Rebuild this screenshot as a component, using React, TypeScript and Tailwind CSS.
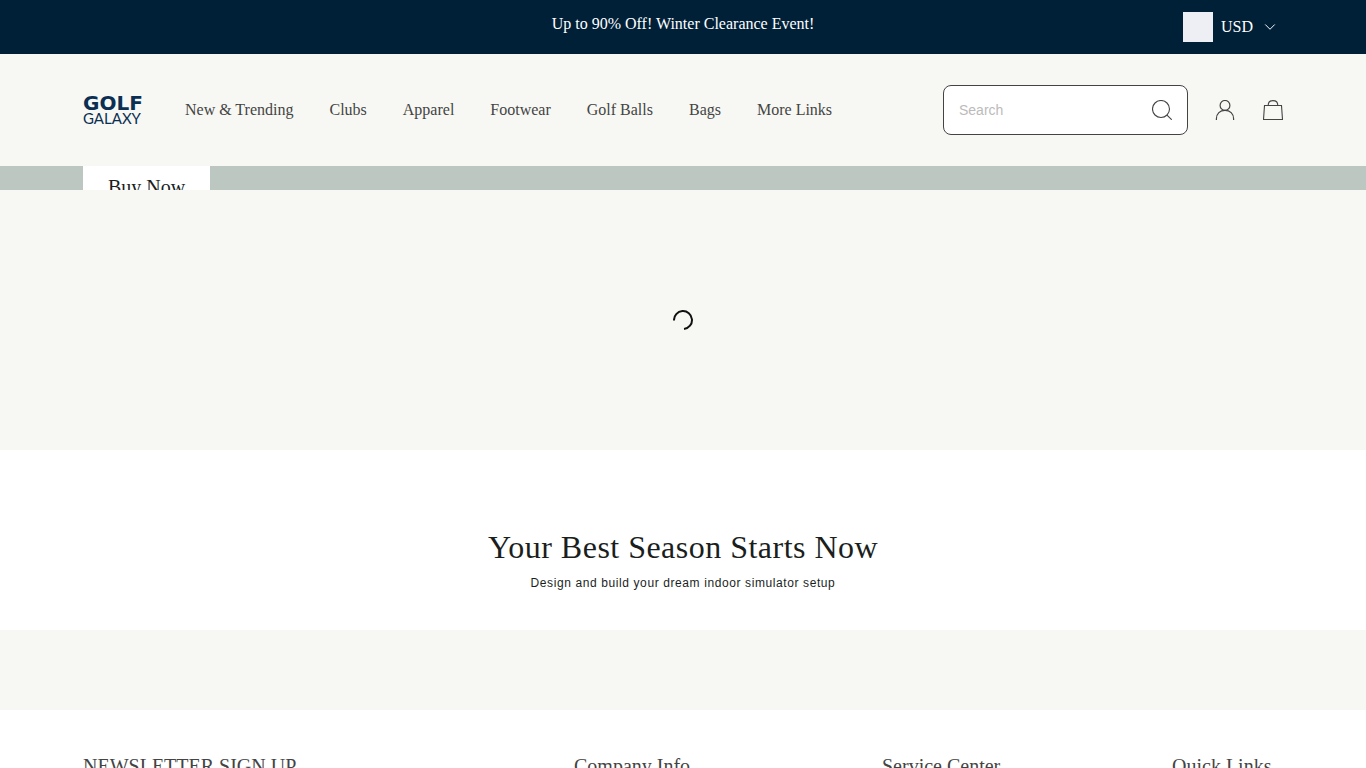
import { ChevronDown } from "lucide-react";

const NAV_LINKS = [
  "New & Trending",
  "Clubs",
  "Apparel",
  "Footwear",
  "Golf Balls",
  "Bags",
  "More Links",
];

const FOOTER_COLUMNS = [
  "NEWSLETTER SIGN UP",
  "Company Info",
  "Service Center",
  "Quick Links",
];

function Logo() {
  return (
    <a
      href="#"
      aria-label="Golf Galaxy"
      className="flex w-[60px] flex-col whitespace-nowrap text-[#0b2f52]"
    >
      <span className="font-['DejaVu_Sans'] text-[20px] leading-4 font-bold">
        GOLF
      </span>
      <span className="font-['Lato'] text-[15px] leading-[14px]">GALAXY</span>
    </a>
  );
}

function SearchIcon() {
  return (
    <svg width="20" height="20" viewBox="0 0 20 20" fill="none" stroke="#444" strokeWidth="1.1">
      <circle cx="9" cy="9" r="8.5" />
      <path d="M15 15.2l4.7 4.5" />
    </svg>
  );
}

function UserIcon() {
  return (
    <svg width="20" height="20" viewBox="0 0 20 20" fill="none" stroke="#444" strokeWidth="1.2">
      <circle cx="10" cy="5.4" r="4.9" />
      <path d="M1.4 20v-1.2C1.4 13.6 5 10.3 10 10.3s8.6 3.3 8.6 8.5V20" />
    </svg>
  );
}

function BagIcon() {
  return (
    <svg width="20" height="20" viewBox="0 0 20 20" fill="none" stroke="#444" strokeWidth="1.1">
      <path d="M1.5 5.5h17l1 14H.5z" />
      <path d="M5.2 5.5C5.2 2.6 7 .6 10 .6s4.8 2 4.8 4.9" />
    </svg>
  );
}

function Spinner() {
  return (
    <svg width="20" height="20" viewBox="0 0 20 20" fill="none" stroke="#111" strokeWidth="2">
      <path d="M1 10.5A9 9 0 1 1 11 19" />
    </svg>
  );
}

function AnnouncementBar() {
  return (
    <div className="bg-[#002038] text-base text-white">
      <div className="mx-auto grid h-[54px] max-w-[1200px] grid-cols-[1fr_auto_1fr]">
        <p className="col-start-2 pt-3 leading-6">
          Up to 90% Off! Winter Clearance Event!
        </p>
        <div className="flex items-center justify-end gap-2">
          <span className="size-[30px] bg-[#eeeff5]" />
          <div className="relative flex w-[62px] items-center">
            <select
              aria-label="Currency"
              className="w-full appearance-none bg-transparent leading-6 outline-none"
            >
              <option>USD</option>
            </select>
            <ChevronDown
              size={18}
              strokeWidth={1.3}
              className="pointer-events-none absolute right-1"
            />
          </div>
        </div>
      </div>
    </div>
  );
}

function Header() {
  return (
    <header className="bg-[#f7f8f3] text-[#444]">
      <div className="mx-auto flex h-28 max-w-[1200px] items-center">
        <Logo />
        <nav className="ml-[42px] flex gap-9 whitespace-nowrap">
          {NAV_LINKS.map((link) => (
            <a key={link} href="#" className="text-base">
              {link}
            </a>
          ))}
        </nav>
        <form className="ml-auto flex h-[50px] w-[245px] items-center rounded-lg border border-[#444] bg-white px-[15px]">
          <input
            type="search"
            placeholder="Search"
            aria-label="Search"
            className="min-w-0 flex-1 font-['Liberation_Sans'] text-sm outline-none placeholder:text-[#bbb]"
          />
          <button type="button" aria-label="Submit search">
            <SearchIcon />
          </button>
        </form>
        <button type="button" aria-label="Account" className="ml-[27px]">
          <UserIcon />
        </button>
        <button type="button" aria-label="Cart" className="ml-7">
          <BagIcon />
        </button>
      </div>
    </header>
  );
}

export default function App() {
  return (
    <div className="bg-white font-['Liberation_Serif',serif]">
      <AnnouncementBar />
      <Header />
      <main>
        <section className="h-6 overflow-hidden bg-[#bdc7c2]">
          <div className="mx-auto max-w-[1200px]">
            <button
              type="button"
              className="bg-white px-[25px] py-[7px] text-xl text-[#1a1f1e]"
            >
              Buy Now
            </button>
          </div>
        </section>
        <section className="flex h-[260px] items-center justify-center bg-[#f7f8f3]">
          <Spinner />
        </section>
        <section className="flex h-[180px] flex-col items-center pt-[77px] text-center text-[#1a1f1e]">
          <h2 className="text-[32px] leading-10 tracking-[0.015em]">
            Your Best Season Starts Now
          </h2>
          <p className="mt-2 font-['Liberation_Sans'] text-xs leading-4 tracking-wider">
            Design and build your dream indoor simulator setup
          </p>
        </section>
        <div className="h-20 bg-[#f7f8f3]" />
      </main>
      <footer className="py-10 text-[#444]">
        <div className="mx-auto grid max-w-[1200px] grid-cols-[491fr_308fr_290fr_111fr]">
          {FOOTER_COLUMNS.map((title) => (
            <h3 key={title} className="text-xl leading-8 whitespace-nowrap">
              {title}
            </h3>
          ))}
        </div>
      </footer>
    </div>
  );
}
